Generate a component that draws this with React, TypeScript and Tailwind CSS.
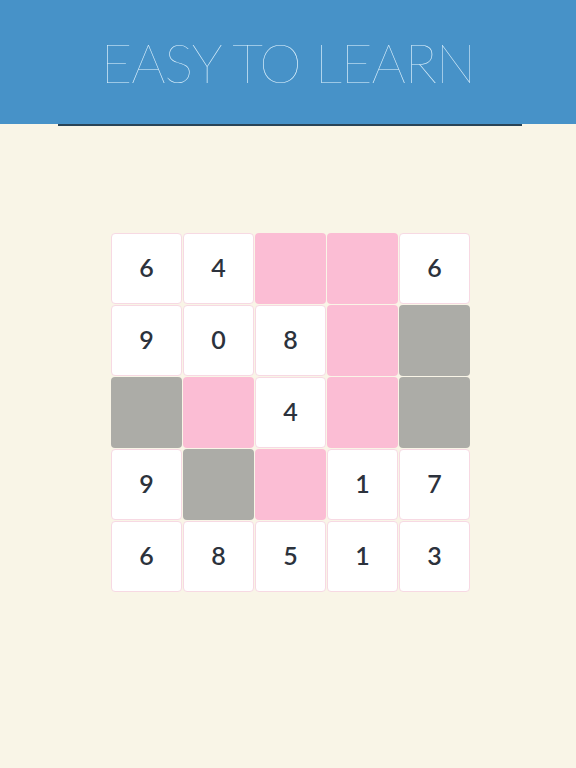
import React from "react";

type Cell = string | "P" | "G";
const rows: Cell[][] = [
  ["6", "4", "P", "P", "6"],
  ["9", "0", "8", "P", "G"],
  ["G", "P", "4", "P", "G"],
  ["9", "G", "P", "1", "7"],
  ["6", "8", "5", "1", "3"],
];

export default function App() {
  return (
    <div className="w-[576px] h-[768px] bg-[#f9f5e7] flex flex-col">
      <div className="h-[124px] bg-[#4792c8] flex items-center justify-center">
        <div
          className="text-[#dff2fd] text-[54px] font-thin tracking-[-1px] leading-none mt-[2px]"
          style={{ fontFamily: "Lato, 'Liberation Sans', sans-serif" }}
        >
          EASY TO LEARN
        </div>
      </div>
      <div className="ml-[58px] mr-[54px] h-[1.5px] bg-[#2a4456]" />
      <div className="pl-[111px] pt-[107px]">
        <div className="grid grid-cols-[repeat(5,71px)] auto-rows-[71px] gap-[1px]">
          {rows.flat().map((c, i) =>
            c === "P" ? (
              <div key={i} className="rounded-[4px] bg-[#fbbdd4]" />
            ) : c === "G" ? (
              <div key={i} className="rounded-[4px] bg-[#acaca7]" />
            ) : (
              <div
                key={i}
                className="rounded-[4px] bg-white border border-[#f7d9e3] flex items-center justify-center text-[25px] font-semibold text-[#2c323c]"
                style={{ fontFamily: "Lato, 'Noto Sans', sans-serif" }}
              >
                {c}
              </div>
            )
          )}
        </div>
      </div>
    </div>
  );
}
